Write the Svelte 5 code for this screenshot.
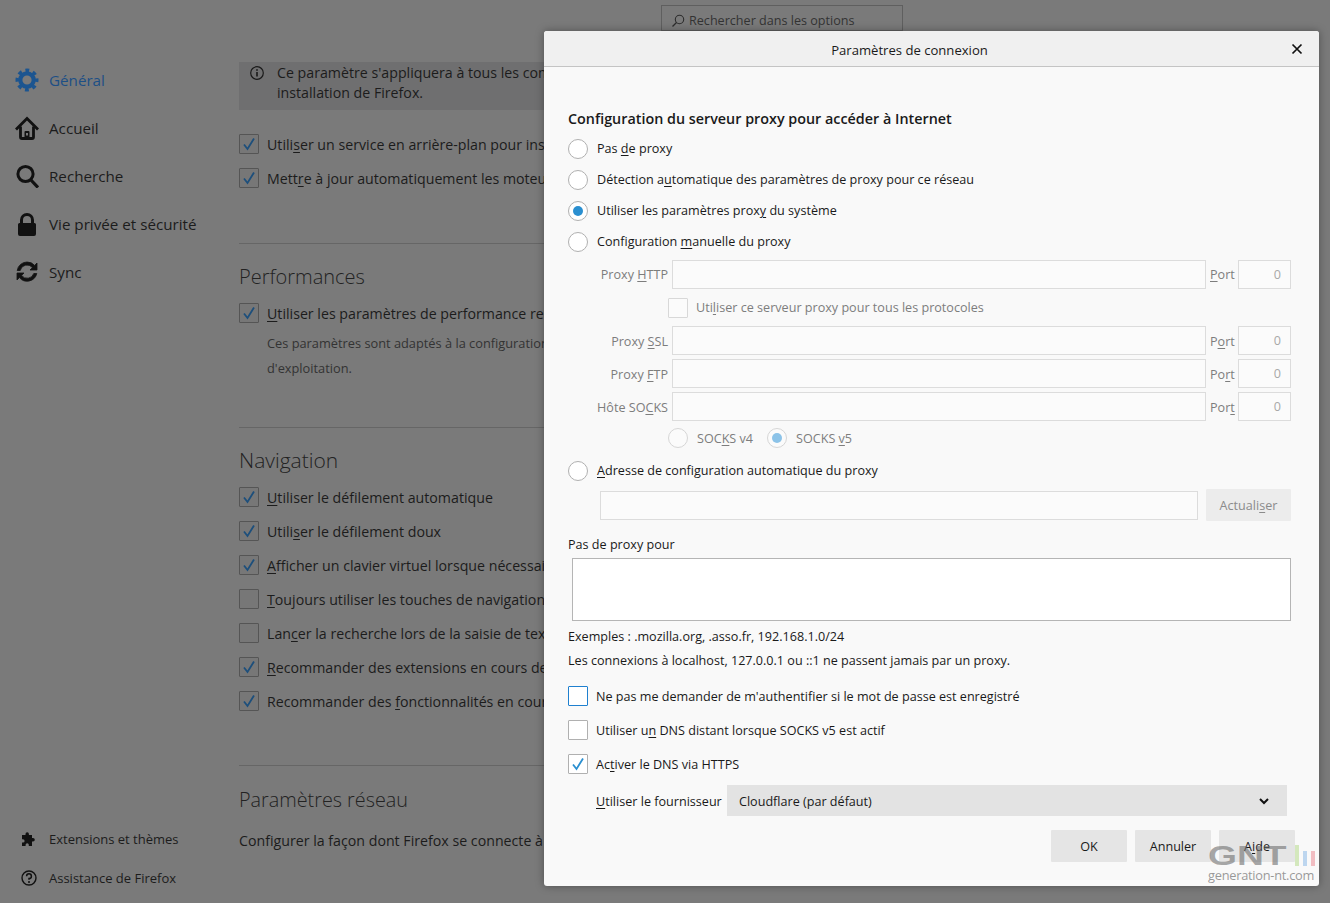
<script lang="ts">
</script>

{#snippet tick()}
	<svg viewBox="0 0 20 20" width="20" height="20"><path d="M5 10.5 L8.5 15 L15 4.5" fill="none" stroke="currentColor" stroke-width="1.8" /></svg>
{/snippet}

<div class="page">
	<aside class="side">
		<nav class="nav">
			<div class="nav-item active">
				<svg viewBox="0 0 24 24" width="24" height="24" fill="none" stroke="#1c5590"><circle cx="12" cy="12" r="6.700" stroke-width="4.200" /><circle cx="12" cy="12" r="9.500" stroke-width="4" stroke-dasharray="3.730 3.730" stroke-dashoffset="1.860" /></svg>
				<span>Général</span>
			</div>
			<div class="nav-item">
				<svg viewBox="0 0 24 24" width="24" height="24" fill="none" stroke="#111"><path d="M1 13.500 12 2.500 23 13.500" stroke-width="2.800" /><path d="M5.500 10.500V21a1.500 1.500 0 0 0 1.500 1.500h10a1.500 1.500 0 0 0 1.500-1.500V10.500" stroke-width="2.800" /><path d="M9.500 23v-7a1 1 0 0 1 1-1h3a1 1 0 0 1 1 1v7z" fill="#111" stroke="none" /><rect x="11" y="17" width="2" height="2.500" fill="#777" stroke="none" /></svg>
				<span>Accueil</span>
			</div>
			<div class="nav-item">
				<svg viewBox="0 0 24 24" width="24" height="24"><circle cx="10.500" cy="10" r="7.600" fill="none" stroke="#111" stroke-width="3" /><path d="M15.500 15.500 23 23.500" stroke="#111" stroke-width="3.200" /></svg>
				<span>Recherche</span>
			</div>
			<div class="nav-item">
				<svg viewBox="0 0 24 24" width="24" height="24"><path fill="#111" fill-rule="evenodd" d="M12 1a7 7 0 0 0-7 7v3H4.500A1.500 1.500 0 0 0 3 12.500V22a2 2 0 0 0 2 2h14a2 2 0 0 0 2-2v-9.500a1.500 1.500 0 0 0-1.500-1.500H19V8a7 7 0 0 0-7-7zm0 3a4 4 0 0 1 4 4v3H8V8a4 4 0 0 1 4-4z" /></svg>
				<span>Vie privée et sécurité</span>
			</div>
			<div class="nav-item">
				<svg viewBox="0 0 24 24" width="24" height="24"><path fill="#111" stroke="#111" stroke-width=".8" d="M12 2a10 10 0 0 0-9.800 8.500h3A7 7 0 0 1 17.500 7.600L15 10h7V3l-2.400 2.400A10 10 0 0 0 12 2zM2 13v7l2.400-2.400A10 10 0 0 0 21.800 13.500h-3A7 7 0 0 1 6.500 15.400L9 13z" /></svg>
				<span>Sync</span>
			</div>
		</nav>
		<div class="foot">
			<div class="foot-item">
				<svg viewBox="0 0 16 16" width="16" height="16"><path fill="#111" d="M1 4h3.500V3a1.700 1.700 0 0 1 3.400 0v1H11v3h1a1.800 1.800 0 0 1 0 3.600h-1V15H7.800v-1.200a1.600 1.600 0 0 0-3.200 0V15H1v-3.500h1a1.600 1.600 0 0 0 0-3.200H1z" /></svg>
				<span>Extensions et thèmes</span>
			</div>
			<div class="foot-item">
				<svg viewBox="0 0 16 16" width="16" height="16"><circle cx="8" cy="8" r="7" fill="none" stroke="#111" stroke-width="1.400" /><path d="M5.600 6.200A2.400 2.400 0 1 1 8 8.600v1.200" fill="none" stroke="#111" stroke-width="1.500" /><circle cx="8" cy="12" r="1" fill="#111" /></svg>
				<span>Assistance de Firefox</span>
			</div>
		</div>
	</aside>

	<main class="main">
		<div class="search">
			<svg viewBox="0 0 14 14" width="14" height="14"><circle cx="8.500" cy="5.500" r="4.200" fill="none" stroke="#2c2c2c" stroke-width="1.100" /><path d="M5.500 8.500 1.500 12.500" stroke="#2c2c2c" stroke-width="1.300" /></svg>
			<span>Rechercher dans les options</span>
		</div>

		<div class="content">
			<div class="info">
				<svg viewBox="0 0 16 16" width="16" height="16"><circle cx="8" cy="8" r="6.300" fill="none" stroke="#1a1a1a" stroke-width="1.200" /><rect x="7.200" y="7" width="1.600" height="4.500" fill="#1a1a1a" /><rect x="7.200" y="4.200" width="1.600" height="1.600" fill="#1a1a1a" /></svg>
				<p>Ce paramètre s'appliquera à tous les comptes Windows et profils Firefox utilisant cette<br />installation de Firefox.</p>
			</div>

			<div class="checks first">
				<div class="mrow"><span class="mbox">{@render tick()}</span><span>Utili<u>s</u>er un service en arrière-plan pour installer les mises à jour</span></div>
				<div class="mrow"><span class="mbox">{@render tick()}</span><span>Mett<u>r</u>e à jour automatiquement les moteurs de recherche</span></div>
			</div>

			<hr class="rule r1" />
			<h2>Performances</h2>
			<div class="mrow perf"><span class="mbox">{@render tick()}</span><span><u>U</u>tiliser les paramètres de performance recommandés</span></div>
			<p class="desc">Ces paramètres sont adaptés à la configuration matérielle de votre ordinateur et à son système<br />d'exploitation.</p>

			<hr class="rule r2" />
			<h2 class="nav-title">Navigation</h2>
			<div class="checks nav-checks">
				<div class="mrow"><span class="mbox">{@render tick()}</span><span><u>U</u>tiliser le défilement automatique</span></div>
				<div class="mrow"><span class="mbox">{@render tick()}</span><span>Utili<u>s</u>er le défilement doux</span></div>
				<div class="mrow"><span class="mbox">{@render tick()}</span><span><u>A</u>fficher un clavier virtuel lorsque nécessaire</span></div>
				<div class="mrow"><span class="mbox"></span><span><u>T</u>oujours utiliser les touches de navigation pour se déplacer</span></div>
				<div class="mrow"><span class="mbox"></span><span>Lan<u>c</u>er la recherche lors de la saisie de texte</span></div>
				<div class="mrow"><span class="mbox">{@render tick()}</span><span><u>R</u>ecommander des extensions en cours de navigation</span></div>
				<div class="mrow"><span class="mbox">{@render tick()}</span><span>Recommander des <u>f</u>onctionnalités en cours de navigation</span></div>
			</div>

			<hr class="rule r3" />
			<h2 class="net-title">Paramètres réseau</h2>
			<p class="net">Configurer la façon dont Firefox se connecte à Internet.</p>
		</div>
	</main>
</div>

<section class="dialog">
	<header class="dialog-head">
		<span>Paramètres de connexion</span>
		<svg class="close" viewBox="0 0 12 12" width="12" height="12"><path d="M1.500 1.500 10.500 10.500M10.500 1.500 1.500 10.500" stroke="#111" stroke-width="1.700" /></svg>
	</header>

	<div class="dialog-body">
		<h3>Configuration du serveur proxy pour accéder à Internet</h3>

		<div class="radio"><span class="dot"></span><span>Pas <u>d</u>e proxy</span></div>
		<div class="radio"><span class="dot"></span><span>Détection a<u>u</u>tomatique des paramètres de proxy pour ce réseau</span></div>
		<div class="radio"><span class="dot on"></span><span>Utiliser les paramètres prox<u>y</u> du système</span></div>
		<div class="radio"><span class="dot"></span><span>Configuration <u>m</u>anuelle du proxy</span></div>

		<div class="proxy">
			<label class="muted" for="http">Proxy <u>H</u>TTP</label>
			<input id="http" class="field" disabled />
			<span class="muted portlabel"><u>P</u>ort</span>
			<input class="field port" disabled value="0" />

			<div class="all muted"><span class="box dim"></span><span>Uti<u>l</u>iser ce serveur proxy pour tous les protocoles</span></div>

			<label class="muted low" for="ssl">Proxy <u>S</u>SL</label>
			<input id="ssl" class="field" disabled />
			<span class="muted portlabel low">P<u>o</u>rt</span>
			<input class="field port" disabled value="0" />

			<label class="muted low" for="ftp">Proxy <u>F</u>TP</label>
			<input id="ftp" class="field" disabled />
			<span class="muted portlabel low">Po<u>r</u>t</span>
			<input class="field port" disabled value="0" />

			<label class="muted low" for="socks">Hôte SO<u>C</u>KS</label>
			<input id="socks" class="field" disabled />
			<span class="muted portlabel low">Por<u>t</u></span>
			<input class="field port" disabled value="0" />

			<div class="socks muted">
				<span class="dot dim"></span><span>SOC<u>K</u>S v4</span>
				<span class="dot dim on gap"></span><span>SOCKS <u>v</u>5</span>
			</div>
		</div>

		<div class="radio"><span class="dot"></span><span><u>A</u>dresse de configuration automatique du proxy</span></div>
		<div class="auto">
			<input class="field" disabled />
			<button class="btn dim-btn">Actuali<u>s</u>er</button>
		</div>

		<div class="noproxy">Pas de proxy pour</div>
		<textarea class="area"></textarea>
		<div class="hint first-hint">Exemples : .mozilla.org, .asso.fr, 192.168.1.0/24</div>
		<div class="hint">Les connexions à localhost, 127.0.0.1 ou ::1 ne passent jamais par un proxy.</div>

		<div class="check top"><span class="box focus"></span><span>Ne pas me demander de m'authentifier si le mot de passe est enre<u>g</u>istré</span></div>
		<div class="check"><span class="box"></span><span>Utiliser u<u>n</u> DNS distant lorsque SOCKS v5 est actif</span></div>
		<div class="check"><span class="box ticked">{@render tick()}</span><span>Ac<u>t</u>iver le DNS via HTTPS</span></div>

		<div class="provider">
			<span class="provider-label"><u>U</u>tiliser le fournisseur</span>
			<div class="select">
				<span>Cloudflare (par défaut)</span>
				<svg viewBox="0 0 12 12" width="12" height="12"><path d="M2 4 6 8 10 4" fill="none" stroke="#111" stroke-width="2" /></svg>
			</div>
		</div>

		<div class="actions">
			<button class="btn">OK</button>
			<button class="btn">Annuler</button>
			<button class="btn">A<u>i</u>de</button>
		</div>
	</div>
</section>

<div class="mark">
	<div class="mark-top">
		<span class="mark-logo">GNT</span>
		<i class="g"></i><i class="b"></i><i class="r"></i>
	</div>
	<div class="mark-url">generation-nt.com</div>
</div>

<style>
	:global(body) {
		margin: 0;
		background: #7a7a7a;
		overflow: hidden;
	}
	.page,
	.dialog,
	.mark {
		font-family: 'Open Sans', 'Noto Sans', sans-serif;
	}
	.page {
		display: flex;
		height: 903px;
		overflow: hidden;
		background: #7a7a7a;
		color: #1c1c1c;
		position: relative;
	}
	u {
		text-underline-offset: 2px;
		text-decoration-thickness: 1px;
	}

	.side {
		width: 239px;
		flex: none;
		display: flex;
		flex-direction: column;
		box-sizing: border-box;
		padding-top: 56px;
		padding-bottom: 6px;
	}
	.nav-item {
		display: flex;
		align-items: center;
		gap: 10px;
		height: 48px;
		padding-left: 15px;
		font-size: 15.200px;
	}
	.nav-item.active {
		color: #1d4f86;
	}
	.foot {
		margin-top: auto;
	}
	.foot-item {
		display: flex;
		align-items: center;
		gap: 12px;
		height: 39px;
		padding-left: 20px;
		font-size: 13px;
	}
	.foot-item svg {
		margin-left: 1px;
	}

	.main {
		flex: 1;
		position: relative;
		font-size: 14.200px;
		white-space: nowrap;
	}
	.content {
		width: 305px;
		height: 903px;
		overflow: hidden;
		padding-top: 62px;
		box-sizing: border-box;
	}
	.search {
		position: absolute;
		left: 422px;
		top: 5px;
		width: 242px;
		height: 26px;
		box-sizing: border-box;
		border: 1px solid #5f5f5f;
		display: flex;
		align-items: center;
		gap: 4px;
		padding: 5px 0 0 9px;
		font-size: 12.600px;
		color: #333;
	}
	.info {
		height: 48px;
		background: #6f6f70;
		display: flex;
		gap: 12px;
		padding-left: 10px;
		box-sizing: border-box;
	}
	.info p {
		margin: 0;
		line-height: 20px;
		padding-top: 1px;
	}
	.info svg {
		margin-top: 3px;
		flex: none;
	}
	.checks.first {
		margin-top: 17px;
	}
	.mrow {
		display: flex;
		align-items: center;
		gap: 8px;
		height: 34px;
	}
	.mbox {
		width: 20px;
		height: 20px;
		box-sizing: border-box;
		border: 1px solid #555;
		background: #777;
		border-radius: 1px;
		color: #1d4f7c;
		flex: none;
		display: block;
	}
	.mbox svg {
		display: block;
		margin: -1px;
	}
	.rule {
		border: 0;
		border-top: 1px solid #666;
		margin: 0;
	}
	.r1 {
		margin-top: 48px;
	}
	.r2 {
		margin-top: 46px;
	}
	.r3 {
		margin-top: 47px;
	}
	h2 {
		margin: 19px 0 0;
		font-weight: 300;
		font-size: 20px;
		line-height: 28px;
		color: #222;
	}
	.nav-title {
		margin-top: 18px;
		font-size: 21px;
	}
	.net-title {
		margin-top: 20px;
		font-size: 19.800px;
	}
	.perf {
		margin-top: 5px;
	}
	.desc {
		margin: 1px 0 0 28px;
		font-size: 12.800px;
		line-height: 25px;
		color: #333;
	}
	.nav-checks {
		margin-top: 6px;
	}
	.net {
		margin: 17px 0 0;
	}

	.dialog {
		position: absolute;
		left: 544px;
		top: 31px;
		width: 775px;
		height: 855px;
		background: #f9f9f9;
		border-radius: 3px;
		box-shadow: 0 0 8px rgba(0, 0, 0, 0.35);
		color: #1a1a1a;
		font-size: 12.600px;
		overflow: hidden;
	}
	.dialog-head {
		background: #f0f0f0;
		border-bottom: 1px solid #c4c4c4;
		display: flex;
		align-items: center;
		justify-content: center;
		padding: 2px 44px 0 0;
		height: 33px;
		font-size: 13.100px;
		font-weight: 500;
		position: relative;
	}
	.close {
		position: absolute;
		right: 16px;
		top: 12px;
	}
	.dialog-body {
		padding: 40px 0 0 24px;
	}
	h3 {
		margin: 0 0 2px;
		font-size: 14.350px;
		font-weight: 600;
		line-height: 24px;
	}
	.radio {
		display: flex;
		align-items: center;
		gap: 9px;
		height: 31px;
	}
	.dot {
		width: 20px;
		height: 20px;
		box-sizing: border-box;
		border: 1px solid #b0b0b0;
		border-radius: 50%;
		background: #fff;
		flex: none;
		position: relative;
	}
	.dot.on::after {
		content: '';
		position: absolute;
		left: 4px;
		top: 4px;
		width: 10px;
		height: 10px;
		border-radius: 50%;
		background: #2a8fd0;
	}
	.dot.dim {
		border-color: #d6d6d6;
		background: #fbfbfb;
	}
	.dot.dim.on::after {
		background: #8cc3e8;
	}
	.proxy {
		display: grid;
		grid-template-columns: 104px 534px 32px 53px;
		row-gap: 4px;
		margin-top: 3px;
		align-items: center;
	}
	.muted {
		color: #7d7d7d;
	}
	.proxy label {
		text-align: right;
		padding-right: 4px;
		box-sizing: border-box;
	}
	.low {
		padding-top: 2px;
	}
	.portlabel {
		padding-left: 4px;
	}
	.field {
		height: 29px;
		box-sizing: border-box;
		border: 1px solid #dcdcdc;
		background: #fbfbfb;
		margin: 0;
		padding: 0;
		font: inherit;
	}
	.proxy .field {
		width: 100%;
	}
	.port {
		text-align: right;
		padding-right: 9px;
		color: #a8a8a8;
	}
	.all {
		grid-column: 1 / -1;
		height: 37px;
		padding-left: 100px;
		display: flex;
		align-items: center;
		gap: 8px;
		margin: -4px 0;
	}
	.socks {
		grid-column: 1 / -1;
		height: 34px;
		padding-left: 100px;
		margin-top: -4px;
		display: flex;
		align-items: center;
		gap: 9px;
	}
	.dot.gap {
		margin-left: 5px;
	}
	.box {
		width: 20px;
		height: 20px;
		box-sizing: border-box;
		border: 1px solid #b0b0b0;
		border-radius: 1px;
		background: #fff;
		flex: none;
		color: #2a8fd0;
		display: block;
	}
	.box svg {
		display: block;
		margin: -1px;
	}
	.box.dim {
		border-color: #d8d8d8;
		background: #fbfbfb;
	}
	.box.focus {
		border-color: #1f80cf;
	}
	.auto {
		display: flex;
		align-items: center;
		margin: 3px 0 0 32px;
		gap: 8px;
	}
	.auto .field {
		width: 598px;
		height: 29px;
	}
	.btn {
		width: 76px;
		height: 32px;
		border: 0;
		background: #e5e5e5;
		border-radius: 1px;
		font: inherit;
		color: #1a1a1a;
		padding: 0;
	}
	.dim-btn {
		width: 85px;
		background: #ececec;
		color: #8b8b8b;
	}
	.noproxy {
		margin-top: 13px;
		height: 22px;
		line-height: 22px;
	}
	.area {
		display: block;
		width: 719px;
		height: 63px;
		margin: 2px 0 0 4px;
		box-sizing: border-box;
		border: 1px solid #b5b5b5;
		background: #fff;
		resize: none;
		padding: 0;
	}
	.hint {
		height: 22px;
		line-height: 22px;
		margin-top: 2px;
	}
	.first-hint {
		margin-top: 5px;
	}
	.check {
		display: flex;
		align-items: center;
		gap: 8px;
		height: 34px;
	}
	.check.top {
		margin-top: 7px;
	}
	.provider {
		display: flex;
		align-items: center;
		margin: 4px 0 0 28px;
		gap: 8px;
	}
	.provider-label {
		width: 123px;
		white-space: nowrap;
		padding-top: 1px;
	}
	.select {
		width: 560px;
		height: 31px;
		background: #e3e3e3;
		display: flex;
		align-items: center;
		justify-content: space-between;
		box-sizing: border-box;
		padding: 1px 17px 0 12px;
	}
	.actions {
		display: flex;
		justify-content: flex-end;
		gap: 8px;
		margin: 14px 24px 0 0;
	}

	.mark {
		position: absolute;
		left: 1208px;
		top: 845px;
		width: 110px;
	}
	.mark-top {
		display: flex;
		align-items: flex-end;
		height: 21px;
		gap: 4px;
		position: relative;
	}
	.mark-logo {
		font-family: 'Liberation Sans', sans-serif;
		font-weight: 700;
		font-size: 28px;
		line-height: 21px;
		width: 83px;
		color: rgba(110, 110, 110, 0.6);
		transform: scaleX(1.33);
		transform-origin: left;
	}
	.mark-top i {
		display: block;
		width: 4px;
	}
	.g {
		height: 21px;
		background: rgba(175, 215, 130, 0.5);
	}
	.b {
		height: 15px;
		background: rgba(130, 180, 230, 0.5);
	}
	.r {
		height: 15px;
		background: rgba(235, 140, 150, 0.55);
	}
	.mark-url {
		font-size: 12.800px;
		line-height: 16px;
		letter-spacing: -0.25px;
		color: rgba(120, 120, 120, 0.75);
		margin-top: 1px;
		white-space: nowrap;
	}
</style>
